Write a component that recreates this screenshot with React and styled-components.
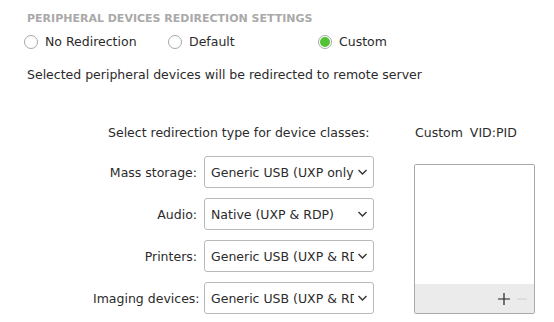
import React from "react";
import styled, { createGlobalStyle } from "styled-components";

const Global = createGlobalStyle`
  html, body { margin: 0; padding: 0; background: #fff; }
  body { font-family: "DejaVu Sans", "Liberation Sans", sans-serif; font-size: 12.5px; color: #2b2b2b; }
`;

const Page = styled.div`
  width: 554px;
  height: 322px;
  box-sizing: border-box;
  padding: 12px 0 0 24px;
  overflow: hidden;
`;

const Header = styled.div`
  font-weight: bold;
  font-size: 11px;
  color: #a9a9a9;
  padding-left: 3px;
  line-height: 13px;
`;

const RadioRow = styled.div`
  display: flex;
  margin-top: 9px;
  height: 16px;
  align-items: center;
`;

const RadioItem = styled.label`
  display: flex;
  align-items: center;
  width: ${(p) => p.$w}px;
  gap: 7px;
  line-height: 16px;
`;

const Circle = styled.span`
  width: 14px;
  height: 14px;
  box-sizing: border-box;
  border: 1px solid #a8a8a8;
  border-radius: 50%;
  background: #fff;
  display: flex;
  align-items: center;
  justify-content: center;
  &::after {
    content: "";
    display: ${(p) => (p.$on ? "block" : "none")};
    width: 10px;
    height: 10px;
    border-radius: 50%;
    background: #52c234;
  }
`;

const Desc = styled.div`
  margin-top: 17px;
  padding-left: 3px;
  line-height: 16px;
`;

const Main = styled.div`
  display: flex;
  margin-top: 42px;
`;

const LeftCol = styled.div`
  margin-left: 69px;
  width: 281px;
  flex: none;
  display: flex;
  flex-direction: column;
`;

const LeftTitle = styled.div`
  padding-left: 15px;
  line-height: 16px;
  margin-bottom: 15px;
`;

const Grid = styled.div`
  display: grid;
  grid-template-columns: 104px 170px;
  column-gap: 7px;
  row-gap: 10px;
  align-items: center;
`;

const Label = styled.div`
  text-align: right;
  white-space: nowrap;
`;

const Select = styled.div`
  height: 32px;
  box-sizing: border-box;
  border: 1px solid #b9b9b9;
  border-radius: 3px;
  display: flex;
  align-items: center;
  padding: 0 5px 0 6px;
  background: #fff;
`;

const SelectText = styled.span`
  flex: 1;
  white-space: nowrap;
  overflow: hidden;
  text-overflow: clip;
`;

const Chevron = styled.svg`
  flex: none;
  margin-left: 3px;
`;

const RightCol = styled.div`
  margin-left: 40px;
  display: flex;
  flex-direction: column;
`;

const RightTitle = styled.div`
  padding-left: 1px;
  line-height: 16px;
  margin-bottom: 23px;
  word-spacing: 3px;
`;

const ListBox = styled.div`
  width: 121px;
  height: 150px;
  box-sizing: border-box;
  border: 1px solid #a9a9a9;
  border-radius: 2px;
  display: flex;
  flex-direction: column;
  overflow: hidden;
`;

const ListArea = styled.div`
  flex: 1;
  background: #fff;
`;

const ListBar = styled.div`
  height: 29px;
  background: #ebebeb;
  display: flex;
  align-items: center;
  justify-content: flex-end;
  padding-right: 6px;
  gap: 5px;
`;

const BarButton = styled.svg`
  flex: none;
`;

function ChevronIcon() {
  return (
    <Chevron width="11" height="8" viewBox="0 0 11 8">
      <path d="M1.5 2 L5.5 6 L9.5 2" fill="none" stroke="#333" strokeWidth="1.4" />
    </Chevron>
  );
}

const rows = [
  ["Mass storage:", "Generic USB (UXP only)"],
  ["Audio:", "Native (UXP & RDP)"],
  ["Printers:", "Generic USB (UXP & RDP)"],
  ["Imaging devices:", "Generic USB (UXP & RDP)"],
];

export default function App() {
  return (
    <>
      <Global />
      <Page>
        <Header>PERIPHERAL DEVICES REDIRECTION SETTINGS</Header>
        <RadioRow>
          <RadioItem $w={144}>
            <Circle />
            No Redirection
          </RadioItem>
          <RadioItem $w={150}>
            <Circle />
            Default
          </RadioItem>
          <RadioItem $w={100}>
            <Circle $on />
            Custom
          </RadioItem>
        </RadioRow>
        <Desc>Selected peripheral devices will be redirected to remote server</Desc>
        <Main>
          <LeftCol>
            <LeftTitle>Select redirection type for device classes:</LeftTitle>
            <Grid>
              {rows.map(([l, v]) => (
                <React.Fragment key={l}>
                  <Label>{l}</Label>
                  <Select>
                    <SelectText>{v}</SelectText>
                    <ChevronIcon />
                  </Select>
                </React.Fragment>
              ))}
            </Grid>
          </LeftCol>
          <RightCol>
            <RightTitle>Custom VID:PID</RightTitle>
            <ListBox>
              <ListArea />
              <ListBar>
                <BarButton width="14" height="14" viewBox="0 0 14 14">
                  <path d="M7 1 V13 M1 7 H13" stroke="#222" strokeWidth="1.2" />
                </BarButton>
                <BarButton width="12" height="14" viewBox="0 0 12 14">
                  <path d="M1 7 H11" stroke="#cfcfcf" strokeWidth="1.2" />
                </BarButton>
              </ListBar>
            </ListBox>
          </RightCol>
        </Main>
      </Page>
    </>
  );
}
